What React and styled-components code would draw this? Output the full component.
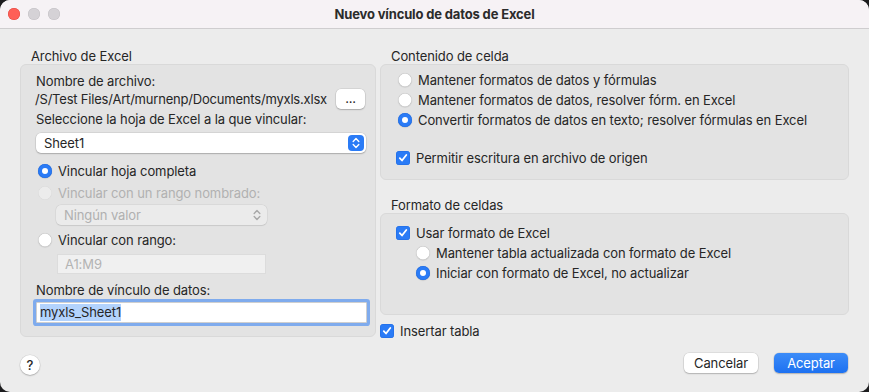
import React from 'react';
import styled, { createGlobalStyle } from 'styled-components';

const GlobalStyle = createGlobalStyle`
  html, body {
    margin: 0;
    padding: 0;
    background: #1c1c1e;
  }
  body {
    font-family: Inter, "Liberation Sans", sans-serif;
    font-size: 13px;
    letter-spacing: -0.1px;
    color: #262626;
  }
`;

const Window = styled.div`
  width: 869px;
  height: 392px;
  background: #ececec;
  border-radius: 10px;
  overflow: hidden;
  display: flex;
  flex-direction: column;
`;

const TitleBar = styled.div`
  height: 28px;
  flex: none;
  background: #f6f2f5;
  border-bottom: 1px solid #cfcdcf;
  display: grid;
  grid-template-columns: 1fr auto 1fr;
  align-items: center;
`;

const Lights = styled.div`
  display: flex;
  gap: 8px;
  padding-left: 8px;
`;

const Light = styled.span`
  width: 12px;
  height: 12px;
  border-radius: 50%;
  background: ${p => (p.$red ? '#fe5f57' : '#d5d2d6')};
  box-shadow: inset 0 0 0 0.5px ${p => (p.$red ? '#e2463f' : '#c2bfc3')};
`;

const Title = styled.div`
  font-weight: 700;
  font-size: 13px;
  color: #2b2b2b;
  letter-spacing: -0.15px;
`;

const Content = styled.div`
  display: flex;
  gap: 4px;
  padding: 20px 20px 0 20px;
`;

const Column = styled.div`
  width: ${p => p.$w}px;
  display: flex;
  flex-direction: column;
`;

const GroupLabel = styled.div`
  line-height: 15px;
  padding-left: 11px;
  margin-top: ${p => p.$mt || 0}px;
`;

const Box = styled.div`
  background: #e3e3e3;
  border: 1px solid #d9d9d9;
  border-radius: 6px;
  height: ${p => p.$h}px;
  box-sizing: border-box;
  display: flex;
  flex-direction: column;
  padding: ${p => p.$pad};
`;

const Text = styled.div`
  line-height: 16px;
  margin-top: ${p => p.$mt || 0}px;
  white-space: nowrap;
  color: ${p => (p.$disabled ? '#b1b1b1' : 'inherit')};
`;

const PathRow = styled.div`
  display: flex;
  align-items: center;
  justify-content: space-between;
  height: 20px;
  margin-left: -1px;
  white-space: nowrap;
  letter-spacing: -0.2px;
`;

const SmallButton = styled.div`
  flex: none;
  width: 29px;
  height: 20px;
  background: #fff;
  border-radius: 5px;
  box-shadow: 0 0 0 0.5px rgba(0, 0, 0, 0.12), 0 1px 1.5px rgba(0, 0, 0, 0.2);
  display: flex;
  align-items: center;
  justify-content: center;
  line-height: 1;
  padding-bottom: 2px;
  box-sizing: border-box;
  font-size: 13px;
`;

const Select = styled.div`
  margin-top: ${p => p.$mt || 0}px;
  margin-left: ${p => p.$ml || 0}px;
  width: ${p => p.$w}px;
  height: 20px;
  box-sizing: border-box;
  border-radius: 5px;
  background: ${p => (p.$disabled ? '#ebebeb' : '#fff')};
  box-shadow: ${p =>
    p.$disabled
      ? '0 0 0 0.5px rgba(0,0,0,0.07), 0 0.5px 1px rgba(0,0,0,0.08)'
      : '0 0 0 0.5px rgba(0,0,0,0.12), 0 1px 1.5px rgba(0,0,0,0.2)'};
  display: flex;
  align-items: center;
  justify-content: space-between;
  padding: 0 2px 0 8px;
  color: ${p => (p.$disabled ? '#b0b0b0' : 'inherit')};
`;

const Stepper = styled.div`
  width: 16px;
  height: 16px;
  border-radius: 4px;
  background: ${p => (p.$disabled ? 'transparent' : '#2a7bf6')};
  display: flex;
  align-items: center;
  justify-content: center;
`;

const Field = styled.div`
  margin-top: ${p => p.$mt || 0}px;
  margin-left: ${p => p.$ml || 0}px;
  width: ${p => p.$w}px;
  height: ${p => p.$h}px;
  box-sizing: border-box;
  display: flex;
  align-items: center;
  background: ${p => (p.$disabled ? '#f0f0f0' : '#fff')};
  border: 1px solid ${p => (p.$disabled ? '#dcdcdc' : '#cfcfcf')};
  color: ${p => (p.$disabled ? '#b3b3b3' : 'inherit')};
  padding-left: ${p => (p.$focus ? 3 : 7)}px;
  box-shadow: ${p => (p.$focus ? '0 0 0 3px rgba(45, 125, 246, 0.55)' : 'none')};
  border-radius: ${p => (p.$focus ? 1 : 0)}px;
`;

const Selected = styled.span`
  background: #b3d3fd;
  line-height: 17px;
`;

const OptionRow = styled.div`
  display: flex;
  align-items: center;
  gap: 6px;
  height: 20px;
  margin-top: ${p => p.$mt || 0}px;
  margin-left: ${p => p.$ml || 0}px;
  white-space: nowrap;
  color: ${p => (p.$disabled ? '#b1b1b1' : 'inherit')};
`;

const RadioDot = styled.span`
  flex: none;
  width: 14px;
  height: 14px;
  border-radius: 50%;
  box-sizing: border-box;
  background: ${p => (p.$on ? '#2a7bf6' : p.$disabled ? '#ececec' : '#fff')};
  box-shadow: ${p =>
    p.$on
      ? 'inset 0 0 0 0.5px #1f6ae0, 0 0.5px 1px rgba(0,0,0,0.2)'
      : p.$disabled
      ? 'inset 0 0 0 0.5px #d8d8d8'
      : 'inset 0 0 0 0.5px #bdbdbd, 0 0.5px 1px rgba(0,0,0,0.15)'};
  display: flex;
  align-items: center;
  justify-content: center;
  &::after {
    content: '';
    display: ${p => (p.$on ? 'block' : 'none')};
    width: 6px;
    height: 6px;
    border-radius: 50%;
    background: #fff;
  }
`;

const CheckBox = styled.span`
  flex: none;
  width: 14px;
  height: 14px;
  border-radius: 3.5px;
  background: #2a7bf6;
  box-shadow: inset 0 0 0 0.5px #1f6ae0;
  display: flex;
  align-items: center;
  justify-content: center;
`;

const Footer = styled.div`
  margin-top: auto;
  height: 52px;
  flex: none;
  display: flex;
  align-items: flex-start;
  padding: 12px 21px 0 20px;
  box-sizing: border-box;
  gap: 16px;
`;

const HelpButton = styled.div`
  width: 20px;
  height: 20px;
  border-radius: 50%;
  background: #fff;
  box-shadow: 0 0 0 0.5px rgba(0, 0, 0, 0.1), 0 1px 1.5px rgba(0, 0, 0, 0.2);
  display: flex;
  align-items: center;
  justify-content: center;
  font-size: 13px;
  font-weight: 500;
  margin-right: auto;
  margin-top: 2px;
`;

const PushButton = styled.div`
  width: 74px;
  height: 20px;
  border-radius: 5px;
  display: flex;
  align-items: center;
  justify-content: center;
  background: ${p => (p.$primary ? 'linear-gradient(#3c8cf8, #1d71f1)' : '#fff')};
  color: ${p => (p.$primary ? '#fff' : '#262626')};
  box-shadow: 0 0 0 0.5px rgba(0, 0, 0, 0.12), 0 1px 1.5px rgba(0, 0, 0, 0.2);
`;

const Radio = ({ on, disabled, children, ...rest }) => (
  <OptionRow $disabled={disabled} {...rest}>
    <RadioDot $on={on} $disabled={disabled} />
    {children}
  </OptionRow>
);

const Check = ({ children, ...rest }) => (
  <OptionRow {...rest}>
    <CheckBox>
      <svg width="10" height="10" viewBox="0 0 10 10">
        <path d="M1.8 5.2 L4 7.5 L8.3 2" fill="none" stroke="#fff" strokeWidth="1.8" strokeLinecap="round" strokeLinejoin="round" />
      </svg>
    </CheckBox>
    {children}
  </OptionRow>
);

const Chevrons = ({ color }) => (
  <svg width="8" height="12" viewBox="0 0 8 12">
    <path d="M1.2 4.4 L4 1.6 L6.8 4.4 M1.2 7.6 L4 10.4 L6.8 7.6" fill="none" stroke={color} strokeWidth="1.4" strokeLinecap="round" strokeLinejoin="round" />
  </svg>
);

export default function App() {
  return (
    <Window>
      <GlobalStyle />
      <TitleBar>
        <Lights>
          <Light $red />
          <Light />
          <Light />
        </Lights>
        <Title>Nuevo vínculo de datos de Excel</Title>
        <div />
      </TitleBar>

      <Content>
        <Column $w={356}>
          <GroupLabel>Archivo de Excel</GroupLabel>
          <Box $h={273} $pad="8px 10px 0 15px">
            <Text>Nombre de archivo:</Text>
            <PathRow>
              <span>/S/Test Files/Art/murnenp/Documents/myxls.xlsx</span>
              <SmallButton>...</SmallButton>
            </PathRow>
            <Text $mt={2}>Seleccione la hoja de Excel a la que vincular:</Text>
            <Select $mt={6} $w={330} $ml={0}>
              <span>Sheet1</span>
              <Stepper>
                <Chevrons color="#fff" />
              </Stepper>
            </Select>
            <Radio on $mt={8} $ml={2}>Vincular hoja completa</Radio>
            <Radio disabled $mt={2} $ml={2}>Vincular con un rango nombrado:</Radio>
            <Select disabled $disabled $mt={2} $w={211} $ml={20}>
              <span>Ningún valor</span>
              <Stepper $disabled>
                <Chevrons color="#a8a8a8" />
              </Stepper>
            </Select>
            <Radio $mt={5} $ml={2}>Vincular con rango:</Radio>
            <Field $disabled $mt={4} $ml={21} $w={209} $h={20}>A1:M9</Field>
            <Text $mt={8}>Nombre de vínculo de datos:</Text>
            <Field $focus $mt={4} $ml={0} $w={331} $h={21}>
              <Selected>myxls_Sheet1</Selected>
            </Field>
          </Box>
        </Column>

        <Column $w={469}>
          <GroupLabel>Contenido de celda</GroupLabel>
          <Box $h={116} $pad="5px 10px 0 17px">
            <Radio>Mantener formatos de datos y fórmulas</Radio>
            <Radio>Mantener formatos de datos, resolver fórm. en Excel</Radio>
            <Radio on>Convertir formatos de datos en texto; resolver fórmulas en Excel</Radio>
            <Check $mt={18} $ml={-2}>Permitir escritura en archivo de origen</Check>
          </Box>
          <GroupLabel $mt={18}>Formato de celdas</GroupLabel>
          <Box $h={102} $pad="9px 10px 0 15px">
            <Check>Usar formato de Excel</Check>
            <Radio $ml={20}>Mantener tabla actualizada con formato de Excel</Radio>
            <Radio on $ml={20}>Iniciar con formato de Excel, no actualizar</Radio>
          </Box>
          <Check $mt={6}>Insertar tabla</Check>
        </Column>
      </Content>

      <Footer>
        <HelpButton>?</HelpButton>
        <PushButton>Cancelar</PushButton>
        <PushButton $primary>Aceptar</PushButton>
      </Footer>
    </Window>
  );
}
